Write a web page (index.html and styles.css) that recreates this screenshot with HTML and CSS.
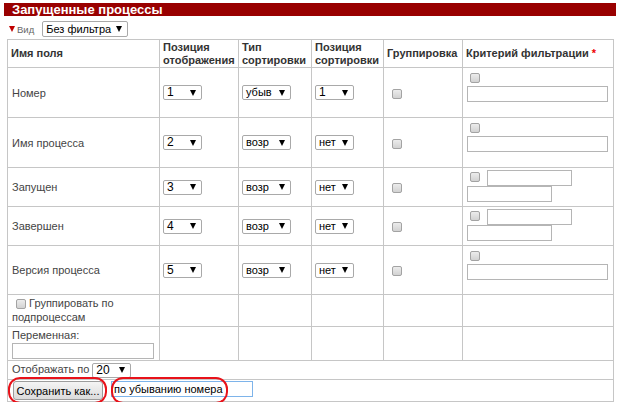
FILE: index.html
```html
<!DOCTYPE html>
<html lang="ru">
<head>
<meta charset="utf-8">
<title>Запущенные процессы</title>
<link rel="stylesheet" href="styles.css">
</head>
<body>
<div class="page">
  <div class="titlebar">Запущенные процессы</div>
  <div class="viewbar">
    <span class="tri"></span><span class="vid">Вид</span>
    <span class="sel sel-view">Без фильтра</span>
  </div>
  <table class="grid">
    <colgroup>
      <col class="c1"><col class="c2"><col class="c3"><col class="c4"><col class="c5"><col class="c6">
    </colgroup>
    <thead>
      <tr class="h-head">
        <th>Имя поля</th>
        <th>Позиция<br>отображения</th>
        <th>Тип<br>сортировки</th>
        <th>Позиция<br>сортировки</th>
        <th>Группировка</th>
        <th>Критерий фильтрации <span class="req">*</span></th>
      </tr>
    </thead>
    <tbody>
      <tr class="h50">
        <td class="name">Номер</td>
        <td><span class="sel w39">1</span></td>
        <td><span class="sel sm w49">убыв</span></td>
        <td><span class="sel w39">1</span></td>
        <td class="grp"><input type="checkbox" class="cb"></td>
        <td class="filter"><input type="checkbox" class="cb"><br><input type="text" class="fin full"></td>
      </tr>
      <tr class="h50">
        <td class="name">Имя процесса</td>
        <td><span class="sel w39">2</span></td>
        <td><span class="sel sm w49">возр</span></td>
        <td><span class="sel sm w39">нет</span></td>
        <td class="grp"><input type="checkbox" class="cb"></td>
        <td class="filter"><input type="checkbox" class="cb"><br><input type="text" class="fin full"></td>
      </tr>
      <tr class="h39">
        <td class="name">Запущен</td>
        <td><span class="sel w39">3</span></td>
        <td><span class="sel sm w49">возр</span></td>
        <td><span class="sel sm w39">нет</span></td>
        <td class="grp"><input type="checkbox" class="cb"></td>
        <td class="filter range"><input type="checkbox" class="cb"><input type="text" class="fin half first"><br><input type="text" class="fin half"></td>
      </tr>
      <tr class="h39">
        <td class="name">Завершен</td>
        <td><span class="sel w39">4</span></td>
        <td><span class="sel sm w49">возр</span></td>
        <td><span class="sel sm w39">нет</span></td>
        <td class="grp"><input type="checkbox" class="cb"></td>
        <td class="filter range"><input type="checkbox" class="cb"><input type="text" class="fin half first"><br><input type="text" class="fin half"></td>
      </tr>
      <tr class="h49">
        <td class="name">Версия процесса</td>
        <td><span class="sel w39">5</span></td>
        <td><span class="sel sm w49">возр</span></td>
        <td><span class="sel sm w39">нет</span></td>
        <td class="grp"><input type="checkbox" class="cb"></td>
        <td class="filter"><input type="checkbox" class="cb"><br><input type="text" class="fin full"></td>
      </tr>
      <tr class="h32">
        <td class="name subgrp"><input type="checkbox" class="cb"> Группировать по подпроцессам</td>
        <td></td><td></td><td></td><td></td><td></td>
      </tr>
      <tr class="h34">
        <td class="name var">Переменная:<br><input type="text" class="fin varin"></td>
        <td></td><td></td><td></td><td></td><td></td>
      </tr>
      <tr class="h19">
        <td colspan="6" class="name">Отображать по <span class="sel w39">20</span></td>
      </tr>
      <tr class="h22">
        <td colspan="6" class="name save">
          <span class="mark mark-btn"><button type="button" class="btn">Сохранить как...</button></span>
          <span class="mark mark-in"><input type="text" class="fin savein" value="по убыванию номера"></span>
        </td>
      </tr>
    </tbody>
  </table>
</div>
</body>
</html>
```
FILE: styles.css
```css
* { box-sizing: border-box; }

body {
  margin: 0;
  background: #fff;
  font-family: "Liberation Sans", Arial, sans-serif;
  color: #444;
}

.page {
  width: 620px;
  padding: 3px 4px 0 4px;
}

.titlebar {
  width: 612px;
  height: 13px;
  line-height: 13px;
  background: #990000;
  color: #fff;
  font-weight: bold;
  font-size: 13px;
  padding-left: 8px;
  white-space: nowrap;
}

.viewbar {
  display: flex;
  align-items: center;
  height: 16px;
  margin-top: 5px;
  padding-left: 5px;
}

.tri {
  width: 0;
  height: 0;
  border-left: 3px solid transparent;
  border-right: 3px solid transparent;
  border-top: 6px solid #c00000;
  margin-right: 2px;
}

.vid {
  font-size: 9.5px;
  color: #666;
  margin-right: 8px;
}

.sel {
  display: inline-flex;
  align-items: center;
  justify-content: space-between;
  flex-shrink: 0;
  white-space: nowrap;
  height: 15px;
  border: 1px solid #a9a9a9;
  border-radius: 2px;
  background: #fff;
  color: #000;
  font-size: 12px;
  line-height: 13px;
  padding: 0 5px 0 3px;
  vertical-align: middle;
}

.sel::after {
  content: "";
  width: 0;
  height: 0;
  border-left: 3px solid transparent;
  border-right: 3px solid transparent;
  border-top: 6px solid #000;
}

.sel.sm { font-size: 11px; }
.sel-view { width: 86px; height: 16px; font-size: 11px; }
.w39 { width: 39px; }
.w49 { width: 49px; }

.grid {
  margin: 2px 0 0 3px;
  width: 606px;
  table-layout: fixed;
  border-collapse: collapse;
  border: 1px solid #c6c6c6;
  font-size: 11px;
}

.c1 { width: 152px; }
.c2 { width: 79px; }
.c3 { width: 73px; }
.c4 { width: 72px; }
.c5 { width: 79px; }
.c6 { width: 151px; }

.grid th,
.grid td {
  border: 1px solid #c6c6c6;
  padding: 0 3px;
  text-align: left;
  vertical-align: middle;
}

.grid th {
  font-size: 11px;
  font-weight: bold;
  color: #333;
  line-height: 13px;
}

.req { color: #e00; }

.grid td.name { padding-left: 4px; }

.h-head { height: 28px; }
.h50 { height: 50px; }
.h39 { height: 39px; }
.h49 { height: 49px; }
.h32 { height: 32px; }
.h34 { height: 34px; }
.h19 { height: 19px; }
.h22 { height: 22px; }

.cb {
  -webkit-appearance: none;
  appearance: none;
  width: 10px;
  height: 10px;
  margin: 0 0 0 4px;
  border: 1px solid #a3a3a3;
  border-radius: 2px;
  background: linear-gradient(#ececec, #d2d2d2);
  vertical-align: middle;
}

.grp .cb { margin-left: 5px; }

.grid td.filter {
  vertical-align: top;
  padding-top: 5px;
  line-height: 0;
}

.filter .cb { margin-bottom: 3px; }

.fin {
  height: 16px;
  border: 1px solid #b5b5b5;
  background: #fff;
  padding: 0 2px;
  margin: 0;
  font: 11px "Liberation Sans", Arial, sans-serif;
  color: #000;
  vertical-align: top;
}

.full { width: 141px; margin-left: 1px; }
.half { width: 85px; margin-left: 1px; }
.range .cb { margin-right: 7px; margin-bottom: 0; vertical-align: top; margin-top: 2px; }
.range .half.first { margin-left: 0; }
.grid td.range { padding-top: 2px; }

.subgrp { line-height: 13px; }
.subgrp .cb { margin: 0 0 2px 4px; }

.grid td.var { vertical-align: top; line-height: 13px; padding-top: 2px; }
.varin { width: 142px; margin-top: 1px; }

.save { padding-top: 2px; vertical-align: top; white-space: nowrap; }

.mark {
  position: relative;
  display: inline-block;
  vertical-align: top;
}

.mark::after {
  content: "";
  position: absolute;
  border: 2px solid #e8121a;
  border-radius: 12px;
  pointer-events: none;
}

.mark-btn { margin-left: 1px; }
.mark-btn::after { left: -5px; right: -4px; top: -4px; bottom: -4px; }

.mark-in { margin-left: 5px; }
.mark-in::after { left: 0; width: 113px; top: -4px; bottom: -7px; }

.btn {
  display: block;
  height: 19px;
  width: 90px;
  padding: 0;
  border: 1px solid #9c9c9c;
  border-radius: 3px;
  background: linear-gradient(#f4f4f4, #dcdcdc);
  font: 11px "Liberation Sans", Arial, sans-serif;
  color: #000;
  white-space: nowrap;
}

.savein {
  display: block;
  width: 142px;
  border-color: #7eb4ea;
  font-size: 11px;
}
```
